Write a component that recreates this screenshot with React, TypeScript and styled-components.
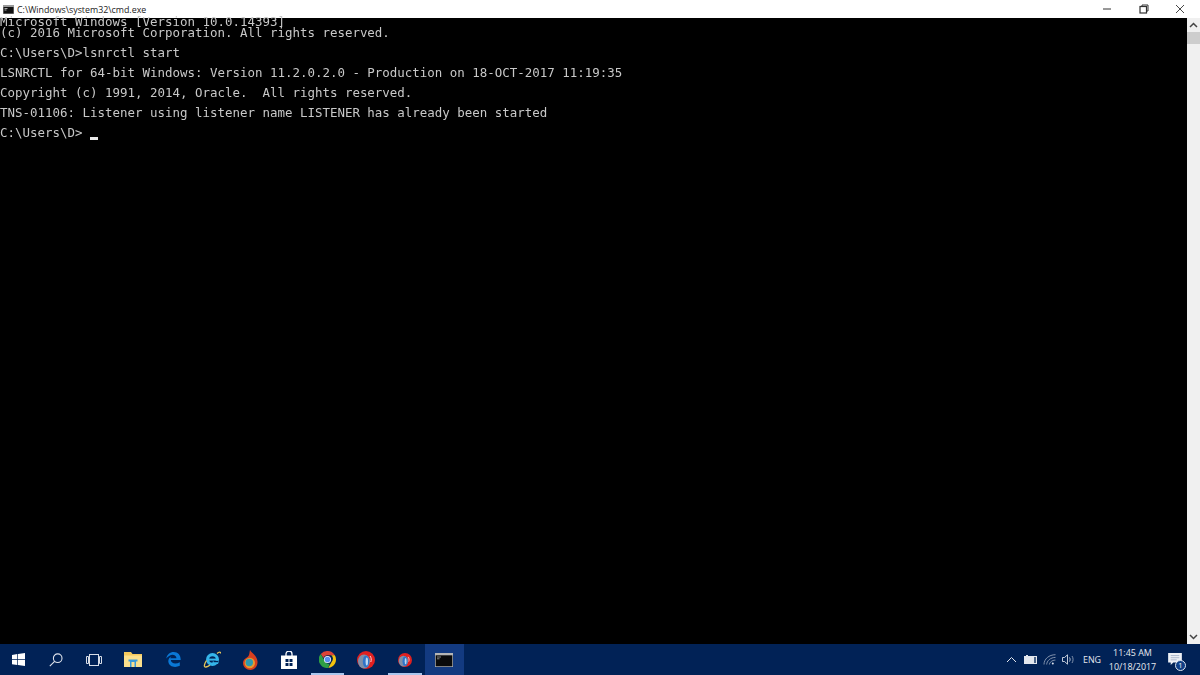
import { ReactNode } from 'react'
import styled, { createGlobalStyle } from 'styled-components'

const GlobalStyle = createGlobalStyle`
    html, body, #root {
        margin: 0;
        height: 100%;
        overflow: hidden;
    }
    body {
        font-family: 'Open Sans', 'Liberation Sans', sans-serif;
    }
`

const Screen = styled.div`
    display: flex;
    flex-direction: column;
    width: 1200px;
    height: 675px;
    background: #000;
`

const TitleBar = styled.div`
    display: flex;
    align-items: center;
    flex: 0 0 18px;
    background: #fff;
    padding-left: 3px;
`

const TitleText = styled.span`
    margin-left: 3px;
    padding-top: 1px;
    font-size: 8.85px;
    color: #222;
    white-space: nowrap;
`

const WindowButtons = styled.div`
    display: flex;
    margin-left: auto;
    padding-right: 1.5px;
`

const WindowButton = styled.div`
    display: flex;
    align-items: center;
    justify-content: center;
    width: 36.5px;
    height: 18px;
    color: #333;
`

const Body = styled.div`
    display: flex;
    flex: 1;
    min-height: 0;
`

const Console = styled.pre`
    flex: 1;
    margin: 0;
    padding: 0;
    background: #000;
    color: #c8c8c8;
    font-family: 'DejaVu Sans Mono', 'Liberation Mono', monospace;
    font-size: 12.46px;
    line-height: 20px;
    filter: blur(0.35px);
`

const FirstLine = styled.div`
    height: 5px;
    line-height: 8px;
`

const Line = styled.div`
    height: 20px;
`

const LastLine = styled.div`
    height: 20px;
    display: flex;
    align-items: center;
`

const Caret = styled.span`
    display: inline-block;
    width: 8px;
    height: 3px;
    margin-top: 11px;
    margin-left: 7.5px;
    background: #e8e8e8;
`

const Scrollbar = styled.div`
    display: flex;
    flex-direction: column;
    align-items: center;
    flex: 0 0 13px;
    background: #f0f0f0;
`

const ScrollArrow = styled.div`
    display: flex;
    align-items: center;
    justify-content: center;
    height: 13.5px;
    width: 100%;
    color: #444;
`

const ScrollThumb = styled.div`
    width: 100%;
    height: 12.5px;
    background: #cdcdcd;
`

const ScrollTrack = styled.div`
    flex: 1;
`

const Taskbar = styled.div`
    display: flex;
    align-items: stretch;
    flex: 0 0 31px;
    background: #012256;
    color: #fff;
`

const TaskButton = styled.div<{ $open?: boolean; $active?: boolean; $width?: number }>`
    position: relative;
    display: flex;
    align-items: center;
    justify-content: center;
    width: ${p => p.$width ?? 38.5}px;
    background: ${p => (p.$active ? '#133a80' : 'transparent')};
    ${p => p.$open && `
        &::after {
            content: '';
            position: absolute;
            left: 3px;
            right: 3px;
            bottom: 0;
            height: 2px;
            background: #a9c6ee;
        }
    `}
`

const Tray = styled.div`
    display: flex;
    align-items: center;
    margin-left: auto;
`

const TrayIcon = styled.div`
    display: flex;
    align-items: center;
    justify-content: center;
    width: 19px;
    color: #d6dce6;
`

const Lang = styled.span`
    margin-left: 5px;
    width: 24.5px;
    font-size: 8.9px;
    color: #e3e7ee;
`

const Clock = styled.div`
    display: flex;
    flex-direction: column;
    align-items: center;
    width: 50px;
    font-size: 8.95px;
    line-height: 14px;
    color: #e8ebf1;
    white-space: nowrap;
`

const Notify = styled.div`
    position: relative;
    display: flex;
    align-items: center;
    align-self: stretch;
    width: 42.5px;
    padding: 0 0 2px 10.5px;
    box-sizing: border-box;
`

const NotifyBadge = styled.span`
    position: absolute;
    left: 17.5px;
    top: 16px;
    width: 11px;
    height: 11px;
    border-radius: 50%;
    border: 1px solid #dfe6f0;
    box-sizing: border-box;
    background: #0f3f86;
    color: #fff;
    font-size: 7.5px;
    line-height: 9px;
    text-align: center;
`

const CmdIcon = () => (
    <svg width="11" height="9" viewBox="0 0 11 9">
        <rect width="11" height="9" fill="#9a9a9a" />
        <rect x="0.5" y="2" width="10" height="6.5" fill="#111" />
        <path d="M1.5 3.5h3M1.5 5h2" stroke="#ccc" strokeWidth="0.8" />
    </svg>
)

const MinIcon = () => (
    <svg width="10" height="10" viewBox="0 0 10 10">
        <path d="M1 5h8" stroke="currentColor" strokeWidth="1" />
    </svg>
)

const RestoreIcon = () => (
    <svg width="10" height="10" viewBox="0 0 10 10" fill="none" stroke="currentColor">
        <rect x="1" y="2.5" width="6.5" height="6.5" strokeWidth="1.2" />
        <path d="M3 2.5V1h6v6H7.5" />
    </svg>
)

const CloseIcon = () => (
    <svg width="10" height="10" viewBox="0 0 10 10">
        <path d="M1 1l8 8M9 1l-8 8" stroke="currentColor" strokeWidth="0.9" />
    </svg>
)

const Chevron = ({ down }: { down?: boolean }) => (
    <svg width="9" height="6" viewBox="0 0 9 6" fill="none" stroke="currentColor" strokeWidth="1.5">
        <path d={down ? 'M1 1l3.5 3.5L8 1' : 'M1 5l3.5-3.5L8 5'} />
    </svg>
)

const WindowsLogo = () => (
    <svg width="13" height="13" viewBox="0 0 13 13" fill="#fff">
        <path d="M0 1.9L5.3 1.1V6.2H0zM6 1L13 0V6.2H6zM0 6.9H5.3V12L0 11.2zM6 6.9H13V13L6 12z" />
    </svg>
)

const SearchIcon = () => (
    <svg width="14" height="14" viewBox="0 0 14 14" fill="none" stroke="#dfe4ec" strokeWidth="1.1">
        <circle cx="8.7" cy="5.2" r="4.3" />
        <path d="M5.6 8.3L.8 13.2" />
    </svg>
)

const TaskViewIcon = () => (
    <svg width="16" height="12" viewBox="0 0 16 12" fill="none" stroke="#d8dde6" strokeWidth="1">
        <rect x="3.5" y="0.5" width="9" height="11" />
        <path d="M0.5 2.5h2v7h-2zM15.500 2.500h-2v7h2z" />
    </svg>
)

const FolderIcon = () => (
    <svg width="18" height="15" viewBox="0 0 18 15">
        <path d="M0 0h7l1.500 2H18v13H0z" fill="#f4c95d" />
        <rect x="0" y="3.500" width="18" height="11.500" fill="#fbe08c" />
        <path d="M4.500 7.500h9v2h-1.500V15h-6V9.500H4.500z" fill="#3a9ad9" />
        <rect x="7.500" y="10" width="3" height="5" fill="#fbe08c" />
    </svg>
)

const EdgeIcon = () => (
    <svg width="15" height="15" viewBox="0 0 15 15">
        <path
            d="M0.300 6.600C1 2.400 4 0 7.700 0c4.300 0 7.100 3 7 8H4.800c0.200 3.800 5.400 4.300 9 2.200v3.600C9.300 16.100 2.800 15 2.300 9.500 2.200 7 3.500 5.400 5.500 4.200 4.700 5 4.300 5.800 4.200 6.300h6.200C10.600 3 6.400 1.700 3.500 3.700 2.200 4.500 1 5.500 0.300 6.600z"
            fill="#0a78d6"
        />
    </svg>
)

const IeIcon = () => (
    <svg width="18" height="17" viewBox="0 0 18 17">
        <circle cx="9.500" cy="8.500" r="6.500" fill="#35b5ea" />
        <circle cx="9.500" cy="8.500" r="3.300" fill="#012256" />
        <rect x="5" y="7.600" width="9.500" height="2" fill="#35b5ea" />
        <path d="M10 10h6l-1 3H9z" fill="#35b5ea" />
        <path d="M10.500 9.900h5v1.300h-5z" fill="#012256" />
        <path
            d="M14 2.500C16 0.800 17.800 0.500 17.600 2.500M3.500 9.500C1.200 13 0.400 16.500 3 16c1.500-0.300 3-1.200 4-2"
            fill="none"
            stroke="#e6c65a"
            strokeWidth="1.300"
        />
    </svg>
)

const FirefoxLikeIcon = () => (
    <svg width="15" height="20" viewBox="0 0 15 20">
        <path d="M7 0c1 3 7 5 7.500 11.500C15 16.500 11 20 7.500 20 3.500 20 0 17 0 13 0 9 4 8 5.500 6 6.500 4.500 6.500 2 7 0z" fill="#d8401f" />
        <circle cx="6.800" cy="13" r="5.200" fill="#e59a2e" />
        <circle cx="6.300" cy="12.500" r="3.700" fill="#2e9bb0" />
    </svg>
)

const StoreIcon = () => (
    <svg width="16" height="18" viewBox="0 0 16 18">
        <path d="M5 5V3a3 3 0 016 0v2" fill="none" stroke="#fff" strokeWidth="1.300" />
        <path d="M0 4.500h16V18H0z" fill="#fff" />
        <path d="M4.500 8h3v3h-3zM8.500 8h3v3h-3zM4.500 12h3v3h-3zM8.500 12h3v3h-3z" fill="#012256" />
    </svg>
)

const ChromeIcon = () => (
    <svg width="17" height="17" viewBox="0 0 48 48">
        <path d="M24 0a24 24 0 0120.800 12H24a12 12 0 00-11.300 8L5 8.600A24 24 0 0124 0z" fill="#db4437" />
        <path d="M44.800 12A24 24 0 0126 47.900L36 30a12 12 0 00-1.600-18z" fill="#f4c20d" />
        <path d="M26 47.900A24 24 0 015 8.600L15 26a12 12 0 0015 9.300z" fill="#2f9e44" />
        <circle cx="24" cy="24" r="10" fill="#fff" />
        <circle cx="24" cy="24" r="8" fill="#5a8ef0" />
    </svg>
)

const OperaLikeIcon = ({ size }: { size: number }) => (
    <svg width={size} height={size} viewBox="0 0 18 18">
        <circle cx="9" cy="9" r="9" fill="#e02020" />
        <ellipse cx="7" cy="10.500" rx="6" ry="7" fill="#7f8fa8" />
        <ellipse cx="9" cy="10.500" rx="3.200" ry="6" fill="#2f74c8" />
        <ellipse cx="9.800" cy="10.500" rx="1.200" ry="4" fill="#bcd8f4" />
        <path d="M13 5c1.300 1.500 1.600 3.800 .8 6" fill="none" stroke="#f6dede" strokeWidth="1" />
    </svg>
)

const TerminalIcon = () => (
    <svg width="18" height="14" viewBox="0 0 18 14">
        <rect width="18" height="14" fill="#b5b5b5" />
        <rect x="0.700" y="2.300" width="16.600" height="11" fill="#0a0a0a" />
        <path d="M2 4h4M2 5.800h2.500" stroke="#bbb" strokeWidth="0.700" />
    </svg>
)

const CaretUpIcon = () => (
    <svg width="11" height="7" viewBox="0 0 11 7" fill="none" stroke="#e3e7ee" strokeWidth="1">
        <path d="M1 6l4.500-4.500L10 6" />
    </svg>
)

const BatteryIcon = () => (
    <svg width="13" height="9" viewBox="0 0 13 9">
        <path d="M0 1h2V0h2v1h9v8H0z" fill="#e3e7ee" />
        <path d="M10 2h2v6h-2z" fill="#4b6488" />
    </svg>
)

const WifiIcon = () => (
    <svg width="13" height="11" viewBox="0 0 13 11" fill="none" stroke="#8e9db5" strokeWidth="0.900">
        <path d="M1 10.500C1 5 6 .700 12.500 .700M3.700 10.500C3.700 7 7.500 3.400 12.500 3.400M6.400 10.500c0-2 2.500-4.400 6-4.400" />
        <circle cx="9.800" cy="9.500" r="1" fill="#dfe4ec" stroke="none" />
    </svg>
)

const VolumeIcon = () => (
    <svg width="14" height="11" viewBox="0 0 14 11" fill="none" stroke="#d6dce6" strokeWidth="0.900">
        <path d="M.5 3.500h2L5.500 .800v9.400L2.500 7.500h-2z" />
        <path d="M7.500 3.500c.8 1.200.8 2.800 0 4" />
        <path d="M10 2c1.400 2 1.400 5 0 7" stroke="#8e9db5" />
    </svg>
)

const NotifyIcon = () => (
    <svg width="14" height="12" viewBox="0 0 16 14">
        <path d="M0 0h16v11H6l-3 3v-3H0z" fill="#eef1f6" />
        <path d="M3 3h10M3 5.500h10M3 8h7" stroke="#8fa0ba" strokeWidth="0.800" />
    </svg>
)

type Task = { key: string; icon: ReactNode; open?: boolean; active?: boolean; width?: number }

const tasks: Task[] = [
    { key: 'start', icon: <WindowsLogo />, width: 37.5 },
    { key: 'search', icon: <SearchIcon />, width: 37.5 },
    { key: 'taskview', icon: <TaskViewIcon />, width: 37.5 },
    { key: 'explorer', icon: <FolderIcon />, width: 41 },
    { key: 'edge', icon: <EdgeIcon />, width: 39 },
    { key: 'ie', icon: <IeIcon /> },
    { key: 'firefox', icon: <FirefoxLikeIcon /> },
    { key: 'store', icon: <StoreIcon /> },
    { key: 'chrome', icon: <ChromeIcon />, open: true },
    { key: 'opera', icon: <OperaLikeIcon size={18} /> },
    { key: 'opera2', icon: <OperaLikeIcon size={14} />, open: true, width: 40 },
    { key: 'cmd', icon: <TerminalIcon />, active: true },
]

export default function App() {
    return (
        <Screen>
            <GlobalStyle />
            <TitleBar>
                <CmdIcon />
                <TitleText>C:\Windows\system32\cmd.exe</TitleText>
                <WindowButtons>
                    <WindowButton><MinIcon /></WindowButton>
                    <WindowButton><RestoreIcon /></WindowButton>
                    <WindowButton><CloseIcon /></WindowButton>
                </WindowButtons>
            </TitleBar>
            <Body>
                <Console>
                    <FirstLine>Microsoft Windows [Version 10.0.14393]</FirstLine>
                    <Line>(c) 2016 Microsoft Corporation. All rights reserved.</Line>
                    <Line>C:\Users\D&gt;lsnrctl start</Line>
                    <Line>LSNRCTL for 64-bit Windows: Version 11.2.0.2.0 - Production on 18-OCT-2017 11:19:35</Line>
                    <Line>Copyright (c) 1991, 2014, Oracle.  All rights reserved.</Line>
                    <Line>TNS-01106: Listener using listener name LISTENER has already been started</Line>
                    <LastLine>C:\Users\D&gt;<Caret /></LastLine>
                </Console>
                <Scrollbar>
                    <ScrollArrow><Chevron /></ScrollArrow>
                    <ScrollThumb />
                    <ScrollTrack />
                    <ScrollArrow><Chevron down /></ScrollArrow>
                </Scrollbar>
            </Body>
            <Taskbar>
                {tasks.map(t => (
                    <TaskButton key={t.key} $open={t.open} $active={t.active} $width={t.width}>{t.icon}</TaskButton>
                ))}
                <Tray>
                    <TrayIcon><CaretUpIcon /></TrayIcon>
                    <TrayIcon><BatteryIcon /></TrayIcon>
                    <TrayIcon><WifiIcon /></TrayIcon>
                    <TrayIcon><VolumeIcon /></TrayIcon>
                    <Lang>ENG</Lang>
                    <Clock>
                        <span>11:45 AM</span>
                        <span>10/18/2017</span>
                    </Clock>
                    <Notify>
                        <NotifyIcon />
                        <NotifyBadge>1</NotifyBadge>
                    </Notify>
                </Tray>
            </Taskbar>
        </Screen>
    )
}
